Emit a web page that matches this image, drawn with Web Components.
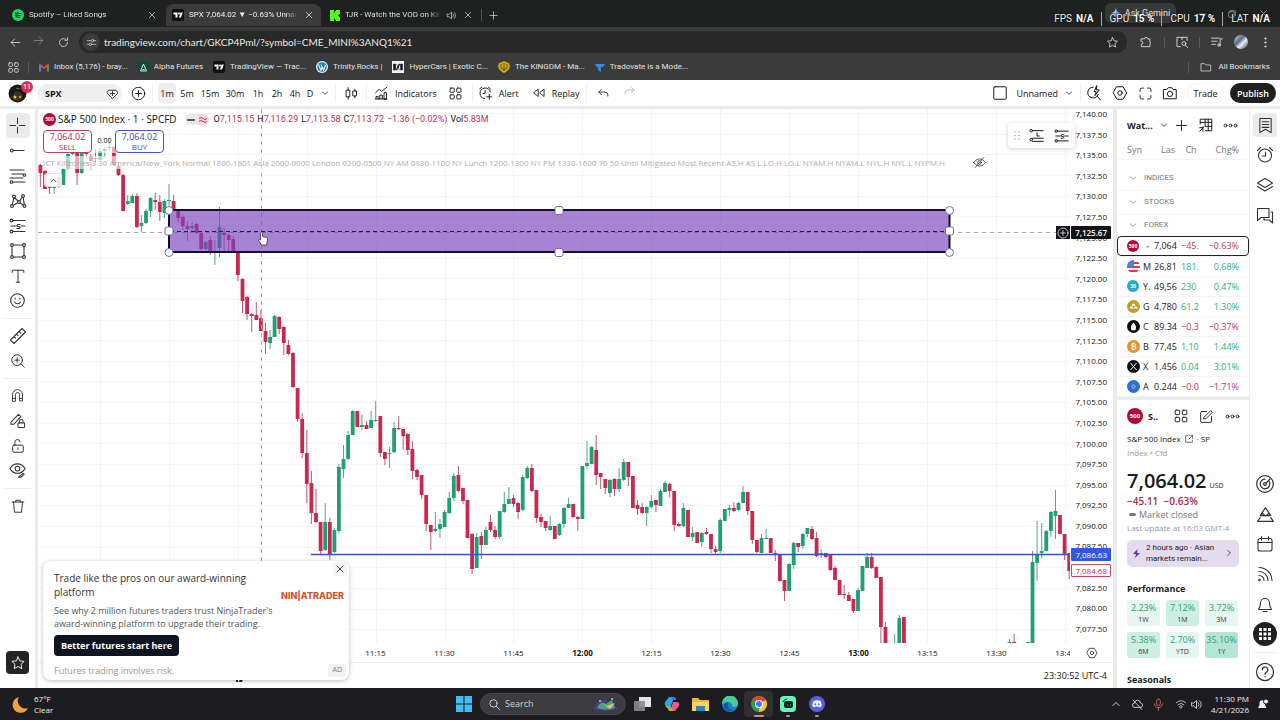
<!DOCTYPE html>
<html lang="en">
<head>
<meta charset="utf-8">
<title>SPX 7,064.02 ▼ −0.63% Unnamed</title>
<style>
html,body{margin:0;height:100%}
body{font-family:"Open Sans","Noto Sans",sans-serif;font-size:9px;color:#131313;overflow:hidden;background:#fff}
</style>
</head>
<body>
<desk-screen></desk-screen>
<script>
const svg=(w,body,vb=18)=>`<svg width="${w}" height="${w}" viewBox="0 0 ${vb} ${vb}" fill="none" stroke="currentColor" stroke-width="1.1" stroke-linecap="round" stroke-linejoin="round" aria-hidden="true">${body}</svg>`;
const I={
close:'<path d="M5 5l8 8M13 5l-8 8"/>',
plus:'<path d="M9 3v12M3 9h12"/>',
back:'<path d="M15 9H3M8 4L3 9l5 5"/>',
fwd:'<path d="M3 9h12M10 4l5 5-5 5"/>',
reload:'<path d="M14.5 9A5.5 5.5 0 1 1 12.5 4.8M14.5 2.5V6H11"/>',
star:'<path d="M9 2.2l2.1 4.4 4.8.6-3.5 3.3.9 4.8L9 13l-4.3 2.3.9-4.8L2.1 7.2l4.8-.6z"/>',
tune:'<path d="M2 6h6M14 6h2M2 12h2M10 12h6"/><circle cx="11" cy="6" r="2"/><circle cx="7" cy="12" r="2"/>',
grid4:'<rect x="2.5" y="2.5" width="5" height="5" rx="1"/><rect x="10.5" y="2.5" width="5" height="5" rx="1"/><rect x="2.5" y="10.5" width="5" height="5" rx="1"/><rect x="10.5" y="10.5" width="5" height="5" rx="1"/>',
puzzle:'<path d="M3 5h4a2 2 0 0 1 4 0h3v4a2 2 0 0 1 0 3v3H3v-3a2 2 0 0 0 0-4z"/>',
lens:'<path d="M7 15H2.500V3h13v4M9 3v3"/><circle cx="11.500" cy="11" r="2.500"/><path d="M13.500 13l2.500 3"/>',
queue:'<path d="M2 4h10M2 8h7M2 12h5M13 13V5h3"/><circle cx="11.500" cy="13" r="1.600"/>',
dots3v:'<g fill="currentColor" stroke="none"><circle cx="9" cy="3.500" r="1.500"/><circle cx="9" cy="9" r="1.500"/><circle cx="9" cy="14.500" r="1.500"/></g>',
speaker:'<path d="M2 7v4h3l4 3.500v-11L5 7zM11.500 6.500a3.500 3.500 0 0 1 0 5M13.500 4a7 7 0 0 1 0 10"/>',
folder:'<path d="M2 4h5l2 2h7v9H2z"/>',
gem:'<path d="M4 4.500h10l2.500 4L9 16 1.500 8.500z"/><path d="M9 6v6M6 9h6"/>',
pluscirc:'<circle cx="9" cy="9" r="7.500"/><path d="M9 5.500v7M5.500 9h7"/>',
chev:'<path d="M5 7.500l4 3.500 4-3.500"/>',
chevup:'<path d="M5 11l4-4 4 4"/>',
chevr:'<path d="M7 5l4 4-4 4"/>',
candles:'<path d="M5 2v3M5 13v3M13 4v2M13 12v2"/><rect x="3" y="5" width="4" height="8"/><rect x="11" y="6" width="4" height="6"/>',
indic:'<path d="M2 8l4-4 3 2.500 6.500-5M2.500 15.500v-3H5v3M7 15.500V11h3v4.500M12 15.500V8h3v7.500zM1.500 15.500h14"/>',
alertplus:'<path d="M14.800 7A6.300 6.300 0 1 0 8 15M8.500 5.500V9H6M2 3.500L4.500 1.500M12.500 1.500L15 3.500M13.500 10v6M10.500 13h6"/>',
alarm:'<circle cx="9" cy="9.500" r="6.500"/><path d="M9.500 6v4H6.500M1.500 4.500L4.500 1.500M13.500 1.500l3 3"/>',
replay:'<path d="M8 4.500v9L2.500 9zM15.500 4.500v9L10 9z"/>',
undo:'<path d="M6 3.500L2.500 7 6 10.500M2.500 7H11a4 4 0 0 1 4 4v1.500"/>',
redo:'<path d="M12 3.500L15.500 7 12 10.500M15.500 7H7a4 4 0 0 0-4 4v1.500"/>',
square:'<rect x="2" y="2" width="14" height="14" rx="1.500"/>',
zap:'<path d="M8 2.500a6 6 0 1 0 5.700 8M12.500 12.500L16 16.500M12 1L9 7.500h2.500L10 12l5-6.500h-3z"/>',
hex:'<path d="M5.500 2h7l4 7-4 7h-7l-4-7z"/><circle cx="9" cy="9" r="2.500"/>',
full:'<path d="M2.500 6.500v-2a2 2 0 0 1 2-2h2M11.500 2.500h2a2 2 0 0 1 2 2v2M15.500 11.500v2a2 2 0 0 1-2 2h-2M6.500 15.500h-2a2 2 0 0 1-2-2v-2"/>',
camera:'<path d="M2 5h3.500l1.500-2h4l1.500 2H16v10.500H2z"/><circle cx="9" cy="10" r="3"/>',
cross:'<path d="M9 1v6M9 11v6M1 9h6M11 9h6"/>',
trend:'<circle cx="3" cy="9" r="1.500"/><path d="M4.500 9H16"/>',
fib:'<path d="M1 3h14M3 7h11M1 11h13M4 15h12"/><circle cx="15.500" cy="8" r="1.300"/><circle cx="2.500" cy="15" r="1.300"/>',
pattern:'<path d="M3 14L5 5l5 5 4-6 1.500 10L10 10l-7 4"/><circle cx="3" cy="14" r="1.400" fill="#fff"/><circle cx="5" cy="4.500" r="1.400" fill="#fff"/><circle cx="10" cy="10" r="1.400" fill="#fff"/><circle cx="14" cy="4" r="1.400" fill="#fff"/><circle cx="15.500" cy="14" r="1.400" fill="#fff"/>',
forecast:'<circle cx="2.500" cy="3.500" r="1.400"/><path d="M4 3.500h12M2 9h5M12 9h4"/><circle cx="2.500" cy="14.500" r="1.400"/><path d="M4 14.500h12M11 7.500H9a1 1 0 0 0 0 2h1a1 1 0 0 1 0 2H8"/>',
longp:'<circle cx="2.500" cy="3" r="1.400"/><path d="M4 3h12M9 5.500V9h2.500M4 11.500h12M4 15h12"/><circle cx="2.500" cy="13" r="1.400"/>',
shape:'<rect x="3" y="3" width="12" height="12"/><g fill="#fff"><circle cx="3" cy="3" r="1.400"/><circle cx="15" cy="3" r="1.400"/><circle cx="3" cy="15" r="1.400"/><circle cx="15" cy="15" r="1.400"/></g>',
text:'<path d="M2.500 5V2.500h13V5M9 2.500v13.500M7 16h4"/>',
smile:'<circle cx="9" cy="9" r="7.200"/><path d="M6 10.500a3.300 3.300 0 0 0 6 0M6.500 6.500v1M11.500 6.500v1"/>',
ruler:'<path d="M1.500 13L13 1.500 16.500 5 5 16.500zM5 9.500l1.500 1.500M7.500 7L9 8.500M10 4.500l1.500 1.500"/>',
zoom:'<circle cx="8" cy="8" r="6"/><path d="M12.500 12.500L16 16M8 5.500v5M5.500 8h5"/>',
magnet:'<path d="M3 15.500V8a6 6 0 0 1 12 0v7.500h-3.500V8a2.500 2.500 0 0 0-5 0v7.500zM3 12.500h3.500M11.500 12.500H15"/>',
pencillock:'<path d="M2 11L10 2.500l2.500 2.500L5 13H2z"/><rect x="9.500" y="11.500" width="7" height="5" rx="1"/><path d="M11 11.500V10a2 2 0 0 1 4 0"/>',
lock:'<rect x="3" y="8" width="12" height="8" rx="1.500"/><path d="M5.500 8V5a3 3 0 0 1 6-.5M9 11v2"/>',
eye:'<path d="M1 7s3-5 8-5 8 5 8 5-3 5-8 5-8-5-8-5z"/><circle cx="9" cy="7" r="2.500"/><path d="M10 16l5-4 1 1-3 3z"/>',
trash:'<path d="M2.500 4.500h13M6.500 4.500V2.500h5v2M4 4.500l1 11.500h8l1-11.500"/>',
eyeoff:'<path d="M1 9s3-5 8-5 8 5 8 5-3 5-8 5-8-5-8-5zM3 16L15 2"/><circle cx="9" cy="9" r="2.500"/>',
tableplus:'<path d="M8 15.500h7.500v-13h-13V8M2.500 6h13M8 2.500V10M11.500 2.500v13M8 10.500h7.500M5.500 11v5M2 12h4M2 16l4-4"/>',
dots3:'<circle cx="3" cy="9" r="1.700"/><circle cx="9" cy="9" r="1.700"/><circle cx="15" cy="9" r="1.700"/>',
wl:'<path d="M3 1.500h12v15L9 13l-6 3.500zM5.500 5h7M5.500 8h7M5.500 11h7"/>',
layers:'<path d="M9 2.500l7.500 4.500L9 11.500 1.500 7zM1.500 10.500L9 15l7.500-4.500"/>',
chat:'<path d="M1.500 2.500h11.500v9H5L1.500 14.500zM15 6h1.500v11L13.500 14H8v-2"/>',
target:'<circle cx="9" cy="9" r="7.500"/><path d="M12.500 6.500A4.300 4.300 0 1 1 9 4.700"/><circle cx="9" cy="9" r="1.300"/><path d="M10 8l3.500-3.500"/>',
ideas:'<path d="M9 2.500L4 10h10zM4 10l2.500-2L9 10.500 12 8l2 2M1.500 15.500L4 12M16.500 15.500L14 12M1.500 15.500h15"/>',
cal:'<rect x="2" y="3.500" width="14" height="12.500" rx="2"/><path d="M2 7.500h14M5.500 1.500v3.500M12.500 1.500v3.500"/>',
rss:'<path d="M3 2.500A13 13 0 0 1 16 15.500M3 6.500a9 9 0 0 1 9 9M3 10.500a5 5 0 0 1 5 5"/><circle cx="3.500" cy="15" r=".8"/>',
bell:'<path d="M2.500 14.500h13c-1.500-2-2-3-2-6.500a4.500 4.500 0 0 0-9 0c0 3.500-.500 4.500-2 6.500zM7 16.500h4"/>',
help:'<circle cx="9" cy="9" r="7.700"/><path d="M6.500 7a2.500 2.500 0 1 1 3.500 2.300Q9 9.800 9 11M9 13v.3"/>',
edit:'<path d="M9 3H3.500A1.500 1.500 0 0 0 2 4.500v10A1.500 1.500 0 0 0 3.500 16h10a1.500 1.500 0 0 0 1.500-1.500V9M6.500 9.500L14 2l2 2-7.500 7.500-2.500.5z"/>',
ext:'<path d="M7 3H3v12h12v-4M10 2.500h5.500V8M15.500 2.500L9 9"/>',
search:'<circle cx="7.500" cy="7.500" r="5"/><path d="M11.500 11.500l4.500 4.500"/>'
};
const ic=(n,s=16)=>svg(s,I[n]);
const btn=(n,label,s=16,cls='')=>`<button class="${cls}" aria-label="${label}">${ic(n,s)}</button>`;
const base=`<style>*{box-sizing:border-box}:host{display:block}button{font:inherit;color:inherit;background:none;border:0;padding:0;margin:0;display:inline-flex;align-items:center;justify-content:center;white-space:nowrap}a{color:inherit;text-decoration:none}svg{display:block;flex:none}p,h2,h3,ul{margin:0;padding:0;font:inherit}</style>`;
function define(name,css,html){
  const t=document.createElement('template');
  t.innerHTML=base+`<style>${css}</style>`+html;
  customElements.define(name,class extends HTMLElement{
    constructor(){super();this.attachShadow({mode:'open'}).append(t.content.cloneNode(true));}
  });
}
const tvLogo=`<svg width="12" height="12" viewBox="0 0 12 12"><rect width="12" height="12" rx="2" fill="#101014"/><path d="M1.500 3.500h4v5h-2V5.500h-2zM8.500 3.500h2.300L9 8.500H7z" fill="#fff"/><circle cx="7" cy="4.500" r="1" fill="#fff"/></svg>`;

/* ---------- browser frame ---------- */
define('browser-tab',`
:host{display:flex;align-items:center;gap:5px;height:22px;width:166px;padding:0 8px 0 12px;color:#dcdcdc;border-radius:7px 7px 0 0}
:host([active]){background:#3b3b3b;width:155px;color:#f0f0f0;padding:0 6px}
:host([audio]){width:160px;padding:0 7px 0 9px}
.t{flex:1;min-width:0;overflow:hidden;white-space:nowrap;-webkit-mask-image:linear-gradient(90deg,#000 88%,transparent)}
`,`<slot name="icon"></slot><span class="t"><slot></slot></span><slot name="audio"></slot>${btn('close','Close tab',12)}`);

define('browser-frame',`
:host{background:#3b3b3b;color:#e3e3e3;font:8px/12px Roboto,sans-serif;position:relative;height:80px}
.tabs{height:27px;background:#1f2020;display:flex;align-items:flex-end;padding-bottom:1px;position:relative}
.tabs i{width:1px;height:12px;background:#555;margin:0 3px 5px 0}
.tabs .new{height:22px;width:16px}
.ask{position:absolute;top:3px;right:104px;width:71px;height:20px;border-radius:6px;background:#373838;gap:4px;font-size:9px}
.win{position:absolute;right:10px;top:7px;display:flex;gap:20px;color:#bbb;align-items:center}
.stats{position:absolute;right:10px;top:12px;display:flex;font:10px/14px Roboto,sans-serif;color:#eee;text-shadow:0 0 2px #000}
.stats b{color:#fff}.stats span+span{border-left:1px solid #aaa;margin-left:7px;padding-left:8px}.stats span{display:flex;gap:4px}
.bar{height:30px;display:flex;align-items:center;padding:0 3px}
.bar>button{width:24px}
.omni{flex:1;height:22px;background:#282828;border-radius:11px;display:flex;align-items:center;padding:0 8px 0 3px;margin:0 7px 0 4px}
.omni .site{width:18px;height:18px;border-radius:9px;background:#3b3b3b;margin-right:4px}
.omni input{flex:1;border:0;background:none;color:#e8e8e8;font:10px/14px Lato,sans-serif;padding:0;outline:0;min-width:0}
.bar i,.marks i{width:1px;height:11px;background:#5b5b5b}
.pic{width:14px;height:14px;border-radius:7px;background:linear-gradient(135deg,#d8b9a5 10%,#506d96 40%,#e9eef2 60%,#2c3c5c)}
.marks{height:20px;display:flex;align-items:center;padding:0 10px 0 7px}
.marks a{display:flex;align-items:center;gap:5px;margin-right:10px;white-space:nowrap}
.marks .all{margin:0 0 0 auto;gap:6px;display:flex}
`,`
<div class="tabs">
 <browser-tab><svg slot="icon" width="12" height="12" viewBox="0 0 12 12"><circle cx="6" cy="6" r="6" fill="#1ed760"/><path d="M3 4.300q3.500-1 6.500.6M3.300 6.300q2.800-.8 5.400.6M3.600 8.100q2.200-.6 4.300.5" stroke="#111" fill="none"/></svg>Spotify – Liked Songs</browser-tab>
 <browser-tab active><span slot="icon">${tvLogo}</span>SPX 7,064.02 ▼ −0.63% Unnamed</browser-tab>
 <browser-tab audio><svg slot="icon" width="10" height="11" viewBox="0 0 10 11"><path d="M0 0h4v2.500h1V1h1V0h4v4H9v1H8v1h1v1h1v4H6v-1H5V8.500H4V11H0z" fill="#53fc18"/></svg>TJR - Watch the VOD on Kick<span slot="audio">${ic('speaker',11)}</span></browser-tab>
 <i></i>${btn('plus','New tab',11,'new')}
 <button class="ask"><svg width="10" height="10" viewBox="0 0 10 10"><path d="M5 0Q5.500 4.500 10 5 5.500 5.500 5 10 4.500 5.500 0 5 4.500 4.500 5 0" fill="#5aa0ff"/><path d="M5 0Q4.500 4.500 0 5l5 0" fill="#f6c64a"/></svg>Ask Gemini</button>
 <div class="win">${svg(10,'<path d="M3 9h12"/>')}${svg(10,'<rect x="3" y="5" width="10" height="10" rx="2"/><path d="M6 3h7a2 2 0 0 1 2 2v7"/>')}${ic('close',13)}</div>
 <div class="stats"><span>FPS <b>N/A</b></span><span>GPU <b>15 %</b></span><span>CPU <b>17 %</b></span><span>LAT <b>N/A</b></span></div>
</div>
<div class="bar">${btn('back','Back',13)}<span style="opacity:.5;margin-left:5px">${btn('fwd','Forward',13)}</span><span style="width:6px"></span>${btn('reload','Reload',13)}
 <div class="omni"><button class="site" aria-label="Site information">${ic('tune',11)}</button><input aria-label="Address" value="tradingview.com/chart/GKCP4Pml/?symbol=CME_MINI%3ANQ1%21">${btn('star','Bookmark',13)}</div>
 ${btn('puzzle','Extensions',14)}<span style="width:6px"></span><i></i><span style="width:5px"></span>${btn('lens','Search side panel',14)}<span style="width:5px"></span><i></i><span style="width:5px"></span>${btn('queue','Media',14)}<span style="width:5px"></span><span class="pic"></span><span style="width:5px"></span>${btn('dots3v','Menu',13)}
</div>
<nav class="marks">${btn('grid4','Apps',13)}<i style="margin:0 10px 0 8px"></i>
 <a href="#"><svg width="10" height="9" viewBox="0 0 10 8"><path d="M1 8V1.500l4 3 4-3V8" fill="none" stroke="#ea4335" stroke-width="1.800"/><path d="M1 8V2" stroke="#4285f4" stroke-width="1.800"/><path d="M9 8V2" stroke="#34a853" stroke-width="1.800"/></svg>Inbox (5,176) - bray...</a>
 <a href="#"><svg width="11" height="11" viewBox="0 0 11 11"><rect width="11" height="11" fill="#12483b"/><path d="M2.500 9l3-7 3 7zm2-1.500h2" stroke="#d7eee6" fill="none"/></svg>Alpha Futures</a>
 <a href="#">${tvLogo}TradingView — Trac...</a>
 <a href="#"><svg width="12" height="12" viewBox="0 0 12 12"><circle cx="6" cy="6" r="6" fill="#e9f3f8"/><circle cx="6" cy="6" r="4.800" fill="#2b84a8"/><path d="M2.500 3.500L5 9.500 6 6 7.500 9.500 9.500 4M5 3.500L7 8" stroke="#fff" fill="none"/></svg>Trinity.Rocks |</a>
 <a href="#"><svg width="12" height="12" viewBox="0 0 12 12"><rect width="12" height="12" fill="#f3f3f3"/><path d="M1.500 3v6h2V3zM8.500 3v6h2V3zM4 9l3-6h1L5 9zM4.500 3l3 6" fill="#111" stroke="#111" stroke-width=".5"/></svg>HyperCars | Exotic C...</a>
 <a href="#"><svg width="12" height="12" viewBox="0 0 12 12"><path d="M6 0l2 1 3 1 1 3-1 3-3 3-2 1-2-1-3-3-1-3 1-3 3-1z" fill="#c9a71e"/><path d="M6 2v8M3 3v4l3 2 3-2V3" stroke="#67520a" fill="none"/></svg>The KINGDM - Ma...</a>
 <a href="#"><svg width="10" height="10" viewBox="0 0 10 10"><path d="M0 2h10L8 5H6v5L3 8V5H2z" fill="#3e86e8"/></svg>Tradovate is a Mode...</a>
 <a href="#" class="all"><i style="margin-right:5px"></i>${ic('folder',12)}All Bookmarks</a>
</nav>`);

/* ---------- chart application header ---------- */
define('tv-header',`
:host{display:flex;align-items:center;height:29px;padding:0 4px 0 8px;border-bottom:3px solid #ebebec;background:#fff;font-size:9px;line-height:13px;font-weight:500}
.av{position:relative;width:30px}.av svg{margin-top:1px}
.badge{position:absolute;left:13px;top:-2px;width:12px;height:12px;border-radius:6px;background:#dc2f55;color:#fff;font-size:7px;font-weight:600;line-height:12px;text-align:center}
.sym{width:84px;height:18px;border-radius:9px;background:#efefef;justify-content:space-between;padding:0 3px 0 7px;font-weight:700}
.w18{width:18px}.w20{width:20px}.w24{width:24px}.w26{width:26px}
i{width:1px;height:18px;background:#f0f0f0}
.on{background:#efefef;border-radius:4px;height:20px}
.lab{gap:6px}
.sp{flex:1}
.trade{width:37px;height:20px;border-radius:10px;border:1px solid #f4f4f4;margin:0 6px 0 4px}
.pub{width:46px;height:20px;border-radius:10px;background:#1f1f1f;color:#fff;font-weight:600}
`,`
<div class="av"><svg width="19" height="19" viewBox="0 0 19 19"><circle cx="9.500" cy="9.500" r="9" fill="#191a18"/><path d="M4 13q2-6 5-6t6 5l-3 5H7z" fill="#3b3422"/><circle cx="7" cy="13" r="1.500" fill="#d6c43a"/><circle cx="12" cy="13" r="1.200" fill="#b2a032"/><path d="M8 4l4 1" stroke="#77715d"/></svg><span class="badge">11</span></div>
<button class="sym">SPX ${ic('gem',13)}</button>
<span style="width:7px"></span>${btn('pluscirc','Compare symbols',15,'w18')}<i style="margin:0 5px"></i>
<button class="w18 on">1m</button><button style="width:22px">5m</button><button class="w24">15m</button><button class="w26">30m</button><button class="w20">1h</button><button class="w18">2h</button><button class="w18">4h</button><button style="width:12px">D</button>${btn('chev','More intervals',12,'w18')}
<i style="margin:0 6px 0 1px"></i>${btn('candles','Chart type',15,'w18')}<i style="margin:0 7px 0 6px"></i>
<button class="lab">${ic('indic',15)}Indicators</button><span style="width:7px"></span>${btn('grid4','Templates',15,'w24')}<i style="margin:0 5px 0 4px"></i>
<button class="lab">${ic('alertplus',15)}Alert</button><span style="width:13px"></span>
<button class="lab">${ic('replay',14)}Replay</button><i style="margin:0 4px 0 6px"></i>
${btn('undo','Undo',13,'w26')}<span style="color:#aaa">${btn('redo','Redo',13,'w26')}</span>
<span class="sp"></span>
${btn('square','Layout',16,'w24')}<button style="margin-left:5px">Unnamed</button><span style="width:2px"></span>${btn('chev','Manage layouts',12,'w18')}<i style="margin-left:2px"></i>
${btn('zap','Quick search',16,'w26')}${btn('hex','Settings',16,'w26')}${btn('full','Fullscreen',15,'w24')}${btn('camera','Snapshot',16,'w26')}
<button class="trade">Trade</button><button class="pub">Publish</button>`);

/* ---------- drawing tools ---------- */
define('draw-tools',`
:host{display:flex;flex-direction:column;align-items:center;padding-top:4px;width:38px;border-right:3px solid #ebebec;background:#fff;color:#333}
button{width:24px;height:25px;flex:none}
.on{background:#ebebeb;border-radius:4px}
hr{width:26px;border:0;border-top:1px solid #ececec;margin:5px 0 4px}
.fav{margin:auto 0 14px;width:23px;height:23px;border-radius:4px;background:#242424;color:#eee}
`,`${btn('cross','Crosshair',17,'on')}${btn('trend','Trend line',17)}${btn('fib','Fib retracement',18)}${btn('pattern','Patterns',18)}${btn('forecast','Forecasting',18)}${btn('shape','Shapes',18)}${btn('text','Text',16)}${btn('smile','Icons',17)}<hr>${btn('ruler','Measure',18)}${btn('zoom','Zoom in',16)}<hr>${btn('magnet','Magnet',15)}${btn('pencillock','Keep drawing',17)}${btn('lock','Lock drawings',16)}${btn('eye','Hide drawings',17)}<hr>${btn('trash','Remove objects',16)}${btn('star','Favorites',16,'fav')}`);

/* ---------- chart ---------- */
// Each bar: colour, high, body top, body bottom, low (y on the canvas); "-" is an empty minute.
const BARS=`r164,165,173,187 r170,171,189,189 r186,187,188,194 g186,187,188,194 r176,177,187,188 g168,169,185,185 g151,154,169,170 g147,149,154,155 r150,151,173,185 g150,151,173,174 r146,148,154,158 r154,156,161,170 r149,158,159,163 g148,151,160,161 g147,149,151,158 g137,147,148,151 r146,147,165,166 r164,166,175,176 r174,175,211,211 g195,201,204,205 g194,196,203,203 r193,196,227,228 g215,223,226,232 g209,211,223,224 g197,198,211,217 r193,200,202,210 r195,202,212,221 g199,201,213,218 g184,200,201,206 r195,201,210,210 r209,210,218,223 r215,217,226,230 r221,226,229,241 g222,226,228,233 r223,224,233,234 r232,233,249,250 g241,242,249,250 r236,240,252,255 g240,251,252,265 g207,227,248,257 r228,233,235,251 r233,235,240,252 r236,239,252,252 r251,252,275,281 r278,279,301,313 r296,297,314,320 r313,314,316,332 r302,315,320,320 r310,318,331,331 r323,331,342,354 g330,337,343,349 g315,316,337,337 r316,317,329,334 r326,327,343,355 r340,345,354,355 r352,353,387,388 r388,388,419,422 r413,419,453,458 r430,453,484,503 r471,483,513,524 r489,513,522,523 r522,522,551,554 g503,522,550,551 r518,522,555,560 g528,530,552,553 g464,467,531,533 g445,459,469,478 g431,435,459,460 g410,411,435,435 r411,411,427,427 g415,425,427,430 r421,425,429,429 g411,420,428,428 g401,420,421,422 r416,416,453,457 r452,452,459,465 g447,453,454,468 g422,428,452,453 r416,428,429,430 r429,429,436,450 r433,434,450,455 r441,449,471,479 r469,470,477,480 r475,475,495,499 r495,495,524,531 r525,525,532,550 g512,529,531,532 g519,524,529,538 g510,512,527,527 g492,498,513,514 g473,476,498,501 r466,475,491,492 r488,488,501,504 r500,500,538,538 r533,534,569,574 g533,537,568,568 r532,536,545,559 g527,530,545,545 r515,522,530,532 r526,530,537,539 g511,511,537,539 g492,504,512,513 g487,499,504,504 r495,498,504,507 r502,503,512,519 g475,477,510,511 g466,468,478,479 r464,468,491,492 r490,490,518,523 r514,517,522,527 r521,521,528,531 g516,526,530,531 r526,526,539,539 g523,524,535,536 g507,508,524,528 g498,504,508,508 r504,504,517,518 r516,517,519,531 g466,466,519,519 g441,463,466,469 g446,447,464,464 r435,450,475,485 r473,473,477,489 r479,479,488,494 g479,480,493,497 r478,479,489,496 g468,479,489,492 g459,462,480,481 r462,462,477,486 r476,476,508,508 r500,505,509,515 r503,507,513,514 g506,507,513,526 g495,501,507,508 r500,500,505,512 g489,491,506,506 g481,483,492,492 r483,484,491,497 r491,491,525,531 r522,524,526,527 g503,508,526,527 r510,510,537,537 g527,533,537,541 r532,532,543,543 g532,533,542,547 r528,532,534,535 r534,534,549,553 r546,549,552,555 g518,520,551,553 g509,509,521,521 g505,508,510,516 r502,508,511,512 g502,503,510,511 g486,492,503,503 r492,492,511,515 r511,511,540,544 r540,540,552,553 g534,538,553,553 g529,538,539,539 r538,538,553,553 r550,553,555,561 r555,555,581,582 r580,580,591,601 g563,564,591,591 g542,543,565,569 r543,543,547,552 g533,534,546,549 g528,528,534,537 r526,529,539,540 r532,538,556,557 g549,553,555,558 r553,553,557,558 r555,555,570,571 r566,568,580,580 r580,580,595,595 r585,594,595,599 r592,595,601,601 r599,599,611,613 g588,590,611,611 g566,566,591,591 g553,557,568,568 r553,557,568,569 r566,567,578,578 r577,577,627,643 r622,627,643,643 - g634,643,643,643 g615,618,643,643 r617,617,643,643 ${'- '.repeat(22)}g639,642,643,643 r634,642,643,643 - - g642,642,643,643 g551,562,643,643 g521,555,563,581 g523,551,553,558 g530,531,551,551 g511,512,531,537 g490,511,516,539 r515,515,534,534 r534,534,555,560 r553,553,571,579`.trim().split(/\s+/);
const OX=38,OY=109;
function chartBars(){
  return BARS.map((b,i)=>{
    if(b==='-')return '';
    const c=b[0]==='r'?'#c9284f':'#1f9f75',w=b[0]==='r'?'#a8324f':'#2f8d70';
    const [h,t,o,l]=b.slice(1).split(',').map(Number);
    const x=Math.round((40.4+i*4.593)*10)/10;
    return `<path d="M${x} ${h}V${l}" stroke="${w}" stroke-opacity=".8" stroke-width="1"/><rect x="${(x-1.9).toFixed(1)}" y="${t}" width="3.8" height="${Math.max(1,o-t)}" fill="${c}"/>`;
  }).join('');
}
function gridLines(){
  let s='';
  for(let i=0;i<26;i++)s+=`<path d="M38 ${Math.round(113+i*20.65)}.5H1069"/>`;
  for(let x=100;x<1070;x+=68.9)s+=`<path d="M${Math.round(x)}.5 109V643"/>`;
  return s;
}
const handle=(x,y,r)=>`<rect x="${x-4}" y="${y-4}" width="8" height="8" rx="${r}" fill="#fff" stroke="#6a6fc0"/>`;
define('price-canvas',`:host{position:relative;overflow:hidden}svg{position:absolute;inset:0;width:100%;height:100%}`,`
<svg role="img" aria-label="SPX one minute candles"><g transform="translate(${-OX} ${-OY})">
<g stroke="#f4f4f5" fill="none">${gridLines()}</g>
${chartBars()}
<path d="M311 554.500H1100" stroke="#3357c2" stroke-width="1.700"/>
<path d="M38 232.500H1100" stroke="#a9a9ae" stroke-dasharray="4 4"/>
<path d="M261.500 109V643" stroke="#a9a9ae" stroke-dasharray="4 4"/>
<rect x="169" y="210" width="780.500" height="42" fill="#7a43be" fill-opacity=".66" stroke="#170d24" stroke-width="2"/>
<path d="M170 231.500H949" stroke="#2c1642" stroke-dasharray="4 3"/>
${handle(169,210.500,4)}${handle(559,210.500,2)}${handle(949.500,210.500,4)}${handle(169,231,2)}${handle(949.500,231,2)}${handle(169,252.500,4)}${handle(559,252.500,2)}${handle(949.500,252.500,4)}
<path d="M260.500 240v-6.500q0-1.500 1-1.500t1 1.500v3l4 1q1.500.5 1 2.500l-1 5h-5l-3-4.500q0-1.500 2-.5z" fill="#fff" stroke="#333" stroke-width=".8"/>
</g></svg>`);

const prices=Array.from({length:26},(_,i)=>(7140-i*2.5).toLocaleString('en-US',{minimumFractionDigits:2}));
define('tv-chart',`
:host{display:grid;grid-template:minmax(0,1fr) 19px 26px/minmax(0,1fr) 43px;position:relative;background:#fff;font-size:8px;line-height:11px;font-weight:500}
.axis{position:relative;padding-right:6px;min-height:0}
.axis ol{margin:-1px 0 0;padding:0 0 8px;list-style:none;height:100%;display:flex;flex-direction:column;justify-content:space-between;text-align:right}
.tag{position:absolute;right:2px;width:40px;padding-right:4px;text-align:right;line-height:13px;border-radius:1px}
.cur{top:117px;background:#121317;color:#fff;font-weight:600}
.cur button{position:absolute;left:-15px;top:0;width:14px;height:13px;background:#121317}
.lvl{top:439px;background:#3457df;color:#fff}
.last{top:455px;border:1px solid #cc4768;color:#c42f55;background:#fff;line-height:11px;padding-right:3px}
.times{display:grid;grid-auto-flow:column;grid-auto-columns:69px;justify-content:start;overflow:hidden;padding-left:303px;text-align:center;align-items:center}
.gear{display:flex;justify-content:center}
.foot{grid-column:1/3;border-top:1px solid #ededee;display:flex;justify-content:flex-end;align-items:center;padding-right:6px;font-size:9px}
.foot svg{margin:4px auto 0 195px}
.legend{position:absolute;left:5px;top:3px;right:100px;z-index:1}
.l1{display:flex;align-items:center;height:15px;gap:2px;white-space:nowrap}
.l1 h2{font-size:10px;line-height:15px;font-weight:500}
.chip{display:flex;width:24px;height:11px;border-radius:6px;background:linear-gradient(90deg,#e9e9ea 50%,#f9d8e6 50%);align-items:center;justify-content:space-around;margin:0 3px 0 6px}
.ohlc{display:flex;gap:3px;font:9px/13px Roboto,sans-serif}
.ohlc b{font-weight:400;color:#bb3253}
.logo{width:13px;height:13px;border-radius:7px;background:#b3093a;color:#fff;font-size:5px;font-weight:700;text-align:center;line-height:13px}
.bs{display:flex;align-items:flex-start;gap:6px;padding-top:3px;width:fit-content;background:#fff9}
.bs button{flex-direction:column;width:49px;height:23px;border:1px solid #b9415d;border-radius:4px;background:#fffffff2;color:#b52a4b;font-size:9px;line-height:10px}
.bs button small{font-size:8px;line-height:9px}
.bs .buy{border-color:#4459b8;color:#3950b5;margin-left:-2px}
.bs span{width:13px;margin-top:6px;font-size:7px;line-height:9px;display:flex;justify-content:center}
.ind{display:flex;align-items:center;gap:3px;padding-top:3px;color:#adadb1;white-space:nowrap;line-height:13px}
.ind span{overflow:hidden;width:927px;flex:0 1 auto;background:#fff9}
.ind svg{color:#333}
.col{width:18px;height:14px;border:1px solid #e6e6e6;border-radius:3px;background:#ffffffd9;margin:4px 0 0 1px}
.float{position:absolute;right:38px;top:14px;height:25px;width:67px;background:#fff;border-radius:4px;box-shadow:0 1px 4px #0003;display:flex;align-items:center;gap:9px;padding-left:6px}
`,`
<price-canvas></price-canvas>
<div class="axis"><ol>${prices.map(p=>`<li>${p}</li>`).join('')}</ol>
<div class="tag lvl">7,086.63</div><div class="tag last">7,084.68</div>
<div class="tag cur"><button aria-label="Add alert">${ic('pluscirc',12)}</button>7,125.67</div></div>
<div class="times">${['11:15','11:30','11:45','12:00','12:15','12:30','12:45','13:00','13:15','13:30','13:45'].map(t=>`<span${/:00/.test(t)?' style="font-weight:700"':''}>${t}</span>`).join('')}</div>
<div class="gear">${btn('hex','Axis settings',12)}</div>
<div class="foot"><svg width="12" height="12" viewBox="0 0 12 12"><path d="M0 2h5v8H3V4H0zM8 2h4l-3 8H6z" fill="#222"/></svg>23:30:52 UTC-4</div>
<div class="legend">
 <div class="l1"><span class="logo">500</span><h2>S&amp;P 500 Index · 1 · SPCFD</h2><span class="chip"><svg width="8" height="4"><rect y="1" width="8" height="2" rx="1" fill="#555"/></svg><svg width="8" height="7" fill="none" stroke="#c0326a"><path d="M0 2.500q2-2 4 0t4 0M0 5.500q2-2 4 0t4 0"/></svg></span>
 <div class="ohlc"><span>O<b>7,115.15</b></span><span>H<b>7,116.29</b></span><span>L<b>7,113.58</b></span><span>C<b>7,113.72</b></span><b>−1.36 (−0.02%)</b><span>Vol<b>5.83M</b></span></div></div>
 <div class="bs"><button>7,064.02<small>SELL</small></button><span>0.00</span><button class="buy">7,064.02<small>BUY</small></button></div>
 <div class="ind"><span>ICT Killzones 3 30 America/New_York Normal 1800-1801 Asia 2000-0000 London 0200-0500 NY AM 0930-1100 NY Lunch 1200-1300 NY PM 1330-1600 70 50 Until Mitigated Most Recent AS.H AS.L LO.H LO.L NYAM.H NYAM.L NYL.H NYL.L NYPM.H</span>${ic('eyeoff',13)}</div>
 ${btn('chevup','Collapse legend',11,'col')}
</div>
<div class="float"><svg width="6" height="9" fill="#aaa"><circle cx="1" cy="1" r=".8"/><circle cx="5" cy="1" r=".8"/><circle cx="1" cy="4.500" r=".8"/><circle cx="5" cy="4.500" r=".8"/><circle cx="1" cy="8" r=".8"/><circle cx="5" cy="8" r=".8"/></svg>${btn('longp','Long position',16)}${btn('forecast','Short position',16)}</div>`);

/* ---------- promotion card ---------- */
define('promo-card',`
:host{background:#fff;border-radius:8px;box-shadow:0 1px 4px #0004;width:306px;height:119px;padding:10px 11px;font-size:9px;line-height:13px;color:#555}
h3{font-size:10px;line-height:14px;color:#333;width:204px;font-weight:500}
.b{display:grid;grid-template-columns:228px 1fr}
.x{position:absolute;right:2px;top:1px;width:14px;height:14px;background:#f4f4f4;border-radius:3px;color:#222}
.copy p{margin-top:5px;white-space:nowrap}
.brand{color:#d4532a;font:800 9px/12px Inter,sans-serif;margin:19px 0 0 -1px;white-space:nowrap}
.cta{margin-top:5px;background:#0f1420;color:#fff;font-weight:700;height:21px;width:125px;border-radius:4px;display:flex;align-items:center;justify-content:center}
.f{display:flex;justify-content:space-between;margin-top:8px;margin-right:-8px;color:#999}
.f span{background:#f2f2f3;border-radius:3px;padding:0 4px;font-size:7px;line-height:11px;color:#7b7b7b}
`,`${btn('close','Close ad',14,'x')}<div class="b"><div class="copy"><h3>Trade like the pros on our award-winning platform</h3><p>See why 2 million futures traders trust NinjaTrader's<br>award-winning platform to upgrade their trading.</p><a class="cta" href="#">Better futures start here</a></div><div class="brand">NIN|ATRADER</div></div><div class="f">Futures trading involves risk.<span>AD</span></div>`);

/* ---------- watchlist and details ---------- */
const coin=(bg,inner)=>`<svg width="13" height="13" viewBox="0 0 13 13"><circle cx="6.500" cy="6.500" r="6.500" fill="${bg}"/>${inner}</svg>`;
const t500=s=>`<span class="c5" style="--s:${s}px">500</span>`;
const rows=[
[t500(12),'<span class="dot">●</span>','7,064','−45.','−0.63%','r'],
['<svg width="13" height="13" viewBox="0 0 13 13"><clipPath id="f"><circle cx="6.500" cy="6.500" r="6.500"/></clipPath><g clip-path="url(#f)"><path d="M0 0h13v13H0z" fill="#f5f5f7"/><path d="M0 3h13M0 7h13M0 11h13" stroke="#d8374e" stroke-width="2"/><path d="M0 0h7v7H0z" fill="#4a82d6"/></g></svg>','M','26,81','181.','0.68%','g'],
['<span class="c5" style="--s:12px;background:#2aa9c9">30</span>','Y.','49,56','230','0.47%','g'],
[coin('#c4a01d','<path d="M2.500 8.500l1-2h2l1 2zM6.700 8.500l1-2h2l1 2zM4.600 5.800l1-2h2l1 2z" fill="#fff"/>'),'G','4,780','61.2','1.30%','g'],
[coin('#0b0b0b','<path d="M6.500 2.500q3 3.500 2.500 5.500a2.500 2.500 0 0 1-5 0q-.5-2 2.500-5.500" fill="#fff"/>'),'C','89.34','−0.3','−0.37%','r'],
[coin('#e8902c','<path d="M5 3.500v6h2.500a1.500 1.500 0 0 0 0-3H5h2a1.500 1.500 0 0 0 0-3zM6 2.500v8" fill="none" stroke="#fff"/>'),'B','77,45','1,10','1.44%','g'],
[coin('#0e0f12','<path d="M3.500 3l6 7M9.500 3l-6 7" stroke="#fff"/>'),'X','1.456','0.04','3.01%','g'],
[coin('#2f6fce','<circle cx="6.500" cy="6.500" r="1.600" fill="none" stroke="#a9cbf5"/>'),'A','0.244','−0.0','−1.71%','r']];
define('watch-panel',`
:host{width:137px;border-left:4px solid #ebebec;background:#fff;font-size:9px;line-height:13px;overflow:hidden;color:#1b1b1b;border-right:1px solid #eee}
.head{display:flex;align-items:center;height:32px;padding:0 6px 0 10px}
.head strong{flex:1;font-weight:700;display:flex;gap:5px;align-items:center}
.head button{width:25px}
table{border-collapse:collapse;table-layout:fixed;width:100%;font-size:9px}
td,th{padding:0;height:20px;overflow:hidden;white-space:nowrap;font-weight:400;text-align:left;border-bottom:1px solid #f4f4f4}
thead th{height:18px;color:#777}
tbody.sec th{height:24px;color:#777;font:8px/12px Roboto,sans-serif}
.sec span{display:flex;gap:5px;align-items:center;padding-left:10px}
.sec .first th{height:31px;padding-top:7px}
.sec tr:last-child th{height:22px;border:0}
td:first-child svg{margin-left:10px}
td:nth-child(4),thead th:nth-child(3){padding-left:2px}
td:last-child,thead th:last-child{text-align:right;padding-right:10px}
td div{overflow:hidden}
.g td:nth-child(n+4){color:#30ad80}.r td:nth-child(n+4){color:#bd3558}
.sel{position:relative}.sel td:last-child::after{content:"";position:absolute;inset:0;border:1px solid #222;border-radius:4px}
.c5{display:block;width:var(--s);height:var(--s);border-radius:50%;background:#b3093a;color:#fff;font-size:5px;font-weight:700;line-height:var(--s);text-align:center}
td .c5{margin-left:10px}.dot{color:#999;font-size:5px;padding-left:3px;vertical-align:middle}
.det{border-top:3px solid #ebebec;padding:4px 10px 0}
.dh{display:flex;align-items:center;height:25px;gap:5px;margin-right:-4px}.dh strong{flex:1;font-weight:700}
.dh button{width:21px}
.dh .c5{font-size:6px}
.nm{display:flex;align-items:center;gap:3px;font-size:8px;line-height:14px;margin-top:3px;white-space:nowrap}
.mut{color:#9a9a9a;font-size:8px;line-height:14px;white-space:nowrap}
.px{font-size:20px;line-height:16px;font-weight:600;margin-top:13px;display:flex;align-items:baseline;gap:3px;white-space:nowrap}
.px small{font-size:7px;font-weight:400}
.ch{color:#b3264b;font-size:10px;line-height:14px;font-weight:600}
.mc{display:flex;gap:3px;align-items:center;color:#777;font-size:9px;line-height:14px;padding-left:2px;white-space:nowrap}
.upd{line-height:11px}
.news{width:112px;height:27px;border-radius:5px;background:#e4dcee;margin-top:7px;justify-content:flex-start;text-align:left;font:8px/11px Roboto,sans-serif;padding:0 4px 0 6px;gap:6px}
.news span{flex:1}
h3{font-weight:700;font-size:9px;line-height:14px}
.ph{margin-top:15px}
.perf{display:grid;grid-template-columns:repeat(3,33px);gap:6px;margin:4px 0 15px}
.perf div{height:26px;border-radius:3px;background:#e6f7f1;color:#2ba379;text-align:center;font-size:9px;line-height:12px;padding-top:2px}
.perf small{display:block;font-size:7px;line-height:11px;color:#333}
.perf .m{background:#ccefe2}.perf .h{background:#b5e6d4}
`,`
<div class="head"><strong>Wat... ${ic('chev',12)}</strong>${btn('plus','Add symbol',15)}${btn('tableplus','Advanced view',16)}${btn('dots3','More',15)}</div>
<table><colgroup><col style="width:26px"><col style="width:11px"><col style="width:25px"><col style="width:22px"><col></colgroup>
<thead><tr><th colspan="2" style="padding-left:10px">Syn</th><th style="text-align:right;padding-right:4px">Las</th><th style="text-align:center">Ch</th><th>Chg%</th></tr></thead>
<tbody class="sec">${['INDICES','STOCKS','FOREX'].map((s,i)=>`<tr class="${i?'':'first'}"><th colspan="5"><span>${ic('chev',12)}${s}</span></th></tr>`).join('')}</tbody>
<tbody>${rows.map((r,i)=>`<tr class="${r[5]}${i?'':' sel'}"><td>${r[0]}</td>${r.slice(1,5).map(c=>`<td><div>${c}</div></td>`).join('')}</tr>`).join('')}</tbody></table>
<section class="det"><div class="dh"><span class="c5" style="--s:16px">500</span><strong>S..</strong>${btn('grid4','Details view',16)}${btn('edit','Add note',15)}${btn('dots3','More',15)}</div>
<p class="nm">S&amp;P 500 Index ${ic('ext',10)} · SP</p><p class="mut">Index • Cfd</p>
<p class="px">7,064.02<small>USD</small></p><p class="ch">−45.11&nbsp; −0.63%</p>
<p class="mc"><svg width="7" height="3"><rect width="7" height="3" rx="1.500" fill="#777"/></svg>Market closed</p><p class="mut upd">Last update at 16:03 GMT-4</p>
<button class="news"><svg width="7" height="9" viewBox="0 0 7 9"><path d="M4.500 0L0 5h3L2 9l5-5H4z" fill="#5a35c5"/></svg><span>2 hours ago · Asian<br>markets remain...</span>${ic('chevr',12)}</button>
<h3 class="ph">Performance</h3>
<div class="perf"><div>2.23%<small>1W</small></div><div class="m">7.12%<small>1M</small></div><div>3.72%<small>3M</small></div><div class="m">5.38%<small>6M</small></div><div>2.70%<small>YTD</small></div><div class="h">35.10%<small>1Y</small></div></div>
<h3>Seasonals</h3></section>`);

define('side-rail',`
:host{width:30px;display:flex;flex-direction:column;align-items:center;padding-top:4px;background:#fff;color:#333}
button{width:24px;height:24px;flex:none}.on{background:#ebebeb;border-radius:4px}
.top,.low{display:flex;flex-direction:column;gap:6px}
.low{margin-top:auto;padding-bottom:4px}
hr{width:24px;border:0;border-top:1px solid #ececec;margin:0 0 1px}
.apps{background:#222;border-radius:12px;color:#fff}
`,`<div class="top">${btn('wl','Watchlist',17,'on')}${btn('alarm','Alerts',18)}${btn('layers','Object tree',18)}${btn('chat','Chats',18)}</div>
<div class="low">${btn('target','Screeners',20)}${btn('ideas','Ideas',19)}${btn('cal','Calendars',18)}${btn('rss','Streams',18)}${btn('bell','Notifications',18)}<button class="apps" aria-label="Products"><svg width="14" height="14" fill="#fff">${[0,1,2].map(r=>[0,1,2].map(c=>`<rect x="${1+c*4.5}" y="${1+r*4.5}" width="3" height="3"/>`).join('')).join('')}</svg></button><hr>${btn('help','Help',20)}</div>`);

/* ---------- taskbar ---------- */
define('task-bar',`
:host{height:32px;background:#1d1d21;color:#eee;display:grid;grid-template-columns:1fr auto 1fr;align-items:center;font:8px/11px "Open Sans",sans-serif}
.w{display:flex;align-items:center;gap:5px;padding-left:12px}
.c{display:flex;align-items:center}
.c>button{width:29px;height:26px;border-radius:4px;position:relative}
.search{display:flex;align-items:center;width:146px;height:22px;border-radius:11px;background:#3b3b41;padding:0 5px 0 7px;gap:4px;margin:0 2px;border:1px solid #48484d}
.search input{flex:1;min-width:0;border:0;background:none;color:#ddd;font:9px/14px "Open Sans",sans-serif;padding:0}
.search input::placeholder{color:#d0d0d0;opacity:1}
.act{background:#2f2f33}.act::after,.run::after{content:"";position:absolute;bottom:0;left:50%;margin-left:-5px;width:10px;height:2px;border-radius:1px;background:#e0847c}
.run::after{width:4px;margin-left:-2px;background:#999}
.t{display:flex;justify-content:flex-end;align-items:center;gap:8px;padding-right:11px;text-align:right}
`,`
<div class="w"><svg width="17" height="17" viewBox="0 0 17 17"><path d="M7 1a8 8 0 1 0 9 11A7.500 7.500 0 0 1 7 1" fill="#f0a23c"/></svg><div>67°F<br>Clear</div></div>
<div class="c">
<button aria-label="Start"><svg width="16" height="16"><path d="M0 0h7.500v7.500H0zM8.500 0H16v7.500H8.500zM0 8.500h7.500V16H0zM8.500 8.500H16V16H8.500z" fill="#45bdf3"/></svg></button>
<label class="search">${ic('search',13)}<input placeholder="Search" aria-label="Search"><svg width="28" height="16" viewBox="0 0 28 16"><path d="M1 13q6-12 13-9t13 9q-13 4-26 0" fill="#4c3b87"/><path d="M5 12q4-8 9-4l6-4 3 8q-9 3-18 0" fill="#4aa37f"/><path d="M9 6l6 4 8-3-5 6z" fill="#e1c37a"/><circle cx="8" cy="5" r="1" fill="#e8b3d6"/><circle cx="20" cy="3" r="1" fill="#8dc7ff"/></svg></label>
<button aria-label="Task view"><svg width="17" height="16"><rect x="5" y="1" width="12" height="10" fill="#e5e5e5"/><rect x="0" y="5" width="11" height="10" fill="#8a8a8a" fill-opacity=".9"/></svg></button>
<button aria-label="Copilot"><svg width="16" height="16" viewBox="0 0 16 16"><path d="M5 1h5l-3 9H3q-3 0-2-4z" fill="#29a3e8"/><path d="M10 1q2 0 2 3h-3L7 1z" fill="#5a63e0"/><path d="M11 15H6l3-9h4q3 0 2 4z" fill="#e85a8a"/><path d="M6 15q-2 0-2-3h4l1 3z" fill="#f2a33c"/><path d="M1 6q0 4 3 4h3L6 14 2 11z" fill="#8bc34a"/></svg></button>
<button aria-label="File Explorer"><svg width="17" height="15" viewBox="0 0 17 15"><path d="M0 1h6l2 2h9v11H0z" fill="#f2b72c"/><path d="M0 5h17v9H0z" fill="#ffd35a"/><path d="M4 9h9v5H4z" fill="#2386d1"/></svg></button>
<button aria-label="Edge"><svg width="16" height="16" viewBox="0 0 16 16"><circle cx="8" cy="8" r="8" fill="#1f7fd0"/><path d="M0 8a8 8 0 0 1 16-1q0 4-4 4-3 0-2-3-4-4-10 0" fill="#48c99a"/><path d="M6 9q0 5 6 5-7 3-10-2-1-6 5-6-1 1-1 3" fill="#0f5aa8"/></svg></button>
<button class="act" aria-label="Chrome"><svg width="16" height="16" viewBox="0 0 16 16"><circle cx="8" cy="8" r="8" fill="#2f9e4d"/><path d="M8 8L1.100 4A8 8 0 0 1 14.900 4z" fill="#df4435"/><path d="M8 8l6.900-4A8 8 0 0 1 8 16z" fill="#f9c332"/><circle cx="8" cy="8" r="4" fill="#fff"/><circle cx="8" cy="8" r="3" fill="#3b7ded"/></svg></button>
<button class="run" aria-label="Capture app"><svg width="16" height="16" viewBox="0 0 16 16"><rect width="16" height="16" rx="4" fill="#69f3b5"/><rect x="4" y="5" width="9" height="7" rx="2" fill="#0f2a22"/><path d="M3 6q1-3 4-3" stroke="#0f2a22" fill="none"/><path d="M7 9h.5M10 9h.5" stroke="#69f3b5" stroke-width="1.500"/></svg></button>
<button class="run" aria-label="Discord"><svg width="16" height="16" viewBox="0 0 16 16"><circle cx="8" cy="8" r="8" fill="#5560e0"/><path d="M4.500 5Q8 3.500 11.500 5q1.500 3 1 5.500l-2 1-.7-1H6.200l-.7 1-2-1Q3 8 4.500 5" fill="#fff"/><circle cx="6.300" cy="8.200" r="1" fill="#5560e0"/><circle cx="9.700" cy="8.200" r="1" fill="#5560e0"/></svg></button>
</div>
<div class="t">${ic('chevup',14)}${svg(13,'<path d="M5 13a3 3 0 0 1 0-6 4 4 0 0 1 8 0 3 3 0 0 1 0 6zM3 3l12 13"/>')}<span style="color:#d8796a">${svg(13,'<rect x="6.500" y="1.500" width="5" height="9" rx="2.500"/><path d="M3.500 8a5.500 5.500 0 0 0 11 0M9 13.500V17"/>')}</span><span style="display:flex;gap:3px;margin-left:2px">${svg(12,'<path d="M2 7q7-6 14 0M4.500 10q4.500-4 9 0M7 12.500q2-2 4 0L9 15z"/>')}${ic('speaker',13)}</span><span>11:30 PM<br>4/21/2026</span><svg width="12" height="12" viewBox="0 0 12 12"><path d="M1 10h8.500L8 7V4a3 3 0 0 0-5.500 0v3zM4 11h3" fill="#eee"/><circle cx="9" cy="3.500" r="2.500" fill="#eee" stroke="#1d1d21"/></svg></div>`);

/* ---------- page ---------- */
define('desk-screen',`
:host{display:flex;flex-direction:column;height:100vh}
main{flex:1;min-height:0;display:grid;grid-template-columns:auto minmax(0,1fr) auto auto;position:relative}
promo-card{position:absolute;left:43px;bottom:8px}
browser-frame,tv-header,task-bar{flex:none}
`,`<browser-frame></browser-frame><tv-header></tv-header><main><draw-tools></draw-tools><tv-chart></tv-chart><watch-panel></watch-panel><side-rail></side-rail><promo-card></promo-card></main><task-bar></task-bar>`);
</script>
</body>
</html>
